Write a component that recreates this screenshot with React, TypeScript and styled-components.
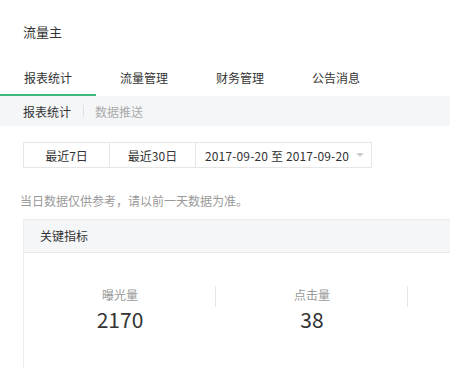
import React, { FC } from "react";
import styled, { createGlobalStyle } from "styled-components";

const GlobalStyle = createGlobalStyle`
  body {
    margin: 0;
    background: #fff;
    font-family: "Noto Sans CJK SC", "Noto Sans", sans-serif;
    color: #333;
  }
`;

const tabs = ["报表统计", "流量管理", "财务管理", "公告消息"];
const stats = [
  { label: "曝光量", value: "2170" },
  { label: "点击量", value: "38" },
];

const App: FC = () => {
  return (
    <>
      <GlobalStyle />
      <Page>
        <Title>流量主</Title>
        <Tabs>
          {tabs.map((t, i) => (
            <Tab key={t} active={i === 0}>
              {t}
            </Tab>
          ))}
        </Tabs>
        <SubNav>
          <SubItem active>报表统计</SubItem>
          <Divider />
          <SubItem>数据推送</SubItem>
        </SubNav>
        <Content>
          <Toolbar>
            <RangeButton>最近7日</RangeButton>
            <RangeButton>最近30日</RangeButton>
            <DatePicker>
              2017-09-20 至 2017-09-20
              <Caret />
            </DatePicker>
          </Toolbar>
          <Note>当日数据仅供参考，请以前一天数据为准。</Note>
          <Card>
            <CardHeader>关键指标</CardHeader>
            <StatRow>
              {stats.map((s) => (
                <Stat key={s.label}>
                  <StatLabel>{s.label}</StatLabel>
                  <StatValue>{s.value}</StatValue>
                </Stat>
              ))}
            </StatRow>
          </Card>
        </Content>
      </Page>
    </>
  );
};

const Page = styled.div`
  width: 450px;
  height: 368px;
  overflow: hidden;
  background: #fff;
`;

const Title = styled.div`
  height: 64px;
  line-height: 64px;
  padding-left: 23px;
  font-size: 13px;
  color: #333;
`;

const Tabs = styled.div`
  display: flex;
  height: 32px;
`;

const Tab = styled.div<{ active?: boolean }>`
  width: 96px;
  text-align: center;
  font-size: 12px;
  line-height: 28px;
  color: #333;
  border-bottom: 2px solid ${(p) => (p.active ? "#3fb97b" : "transparent")};
  box-sizing: border-box;
`;

const SubNav = styled.div`
  display: flex;
  align-items: center;
  height: 30px;
  padding-left: 23px;
  background: #f5f6f8;
`;

const SubItem = styled.div<{ active?: boolean }>`
  font-size: 12px;
  color: ${(p) => (p.active ? "#333" : "#aaa")};
`;

const Divider = styled.div`
  width: 1px;
  height: 12px;
  background: #e0e0e0;
  margin: 0 11px 0 12px;
`;

const Content = styled.div`
  padding: 16px 0 0 23px;
`;

const Toolbar = styled.div`
  display: flex;
  height: 26px;
`;

const RangeButton = styled.div`
  width: 87px;
  height: 26px;
  box-sizing: border-box;
  border: 1px solid #e6e6e6;
  margin-right: -1px;
  display: flex;
  align-items: center;
  justify-content: center;
  font-size: 12px;
  color: #333;
`;

const DatePicker = styled.div`
  width: 177px;
  height: 26px;
  box-sizing: border-box;
  border: 1px solid #e6e6e6;
  display: flex;
  align-items: center;
  padding-left: 9px;
  font-size: 12px;
  letter-spacing: 0.15px;
  color: #333;
`;

const Caret = styled.span`
  width: 0;
  height: 0;
  margin-left: 7px;
  border-left: 4px solid transparent;
  border-right: 4px solid transparent;
  border-top: 4px solid #ccc;
`;

const Note = styled.div`
  margin: 25px 0 0 -3px;
  font-size: 12px;
  line-height: 16px;
  color: #999;
`;

const Card = styled.div`
  margin-top: 10px;
  border-left: 1px solid #ececec;
  border-top: 1px solid #ececec;
  height: 200px;
`;

const CardHeader = styled.div`
  height: 32px;
  line-height: 32px;
  padding-left: 16px;
  background: #f5f6f8;
  border-bottom: 1px solid #e8e8e8;
  font-size: 12px;
  color: #333;
`;

const StatRow = styled.div`
  display: flex;
  padding-top: 32px;
`;

const Stat = styled.div`
  flex: 0 0 192px;
  display: flex;
  flex-direction: column;
  align-items: center;
  position: relative;
  &::after {
    content: "";
    position: absolute;
    right: 0;
    top: 1px;
    width: 1px;
    height: 21px;
    background: #e6e6e6;
  }
`;

const StatLabel = styled.div`
  font-size: 12px;
  line-height: 20px;
  color: #999;
`;

const StatValue = styled.div`
  font-size: 21px;
  line-height: 28px;
  color: #333;
`;

export default App;
